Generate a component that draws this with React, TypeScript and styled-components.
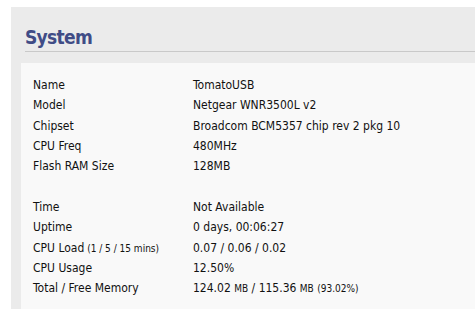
import { ReactNode } from 'react';
import styled, { createGlobalStyle } from 'styled-components';

const GlobalStyle = createGlobalStyle`
  html, body {
    margin: 0;
    padding: 0;
    background: #ffffff;
  }
  body {
    font-family: "DejaVu Sans Condensed", "DejaVu Sans", sans-serif;
    font-size: 12px;
    color: #000000;
  }
`

const Section = styled.section`
  margin: 7px 0 2px 11px;
  background: #ebebeb;
  display: flex;
  flex-direction: column;
`
const Heading = styled.h2`
  margin: 0 0 11px 14px;
  padding: 18px 0 2px 0;
  height: 24px;
  line-height: 24px;
  font-size: 19px;
  letter-spacing: -0.7px;
  font-weight: bold;
  color: #404c86;
  border-bottom: 1px solid #c9c9c9;
`
const Panel = styled.div`
  margin-left: 10px;
  background: #f9f9f9;
  padding: 12px 12px 11px 12px;
`
const InfoRow = styled.div`
  display: grid;
  grid-template-columns: 160px 1fr;
  height: 20.3px;
  align-items: center;
  white-space: nowrap;
  color: #111111;
`
const Label = styled.div``
const Value = styled.div``
const Small = styled.span`
  font-size: 10px;
`

type Row = { label: string; note?: string; value: ReactNode } | null

const rows: Row[] = [
  { label: 'Name', value: 'TomatoUSB' },
  { label: 'Model', value: 'Netgear WNR3500L v2' },
  { label: 'Chipset', value: 'Broadcom BCM5357 chip rev 2 pkg 10' },
  { label: 'CPU Freq', value: '480MHz' },
  { label: 'Flash RAM Size', value: '128MB' },
  null,
  { label: 'Time', value: 'Not Available' },
  { label: 'Uptime', value: '0 days, 00:06:27' },
  { label: 'CPU Load', note: '(1 / 5 / 15 mins)', value: '0.07 / 0.06 / 0.02' },
  { label: 'CPU Usage', value: '12.50%' },
  {
    label: 'Total / Free Memory',
    value: (
      <>
        124.02 <Small>MB</Small> / 115.36 <Small>MB</Small> <Small>(93.02%)</Small>
      </>
    ),
  },
]

export default function App() {
  return (
    <>
      <GlobalStyle />
      <Section>
        <Heading>System</Heading>
        <Panel>
          {rows.map((row, i) =>
            row ? (
              <InfoRow key={i}>
                <Label>
                  {row.label}
                  {row.note && <Small> {row.note}</Small>}
                </Label>
                <Value>{row.value}</Value>
              </InfoRow>
            ) : (
              <InfoRow key={i} />
            )
          )}
        </Panel>
      </Section>
    </>
  )
}
